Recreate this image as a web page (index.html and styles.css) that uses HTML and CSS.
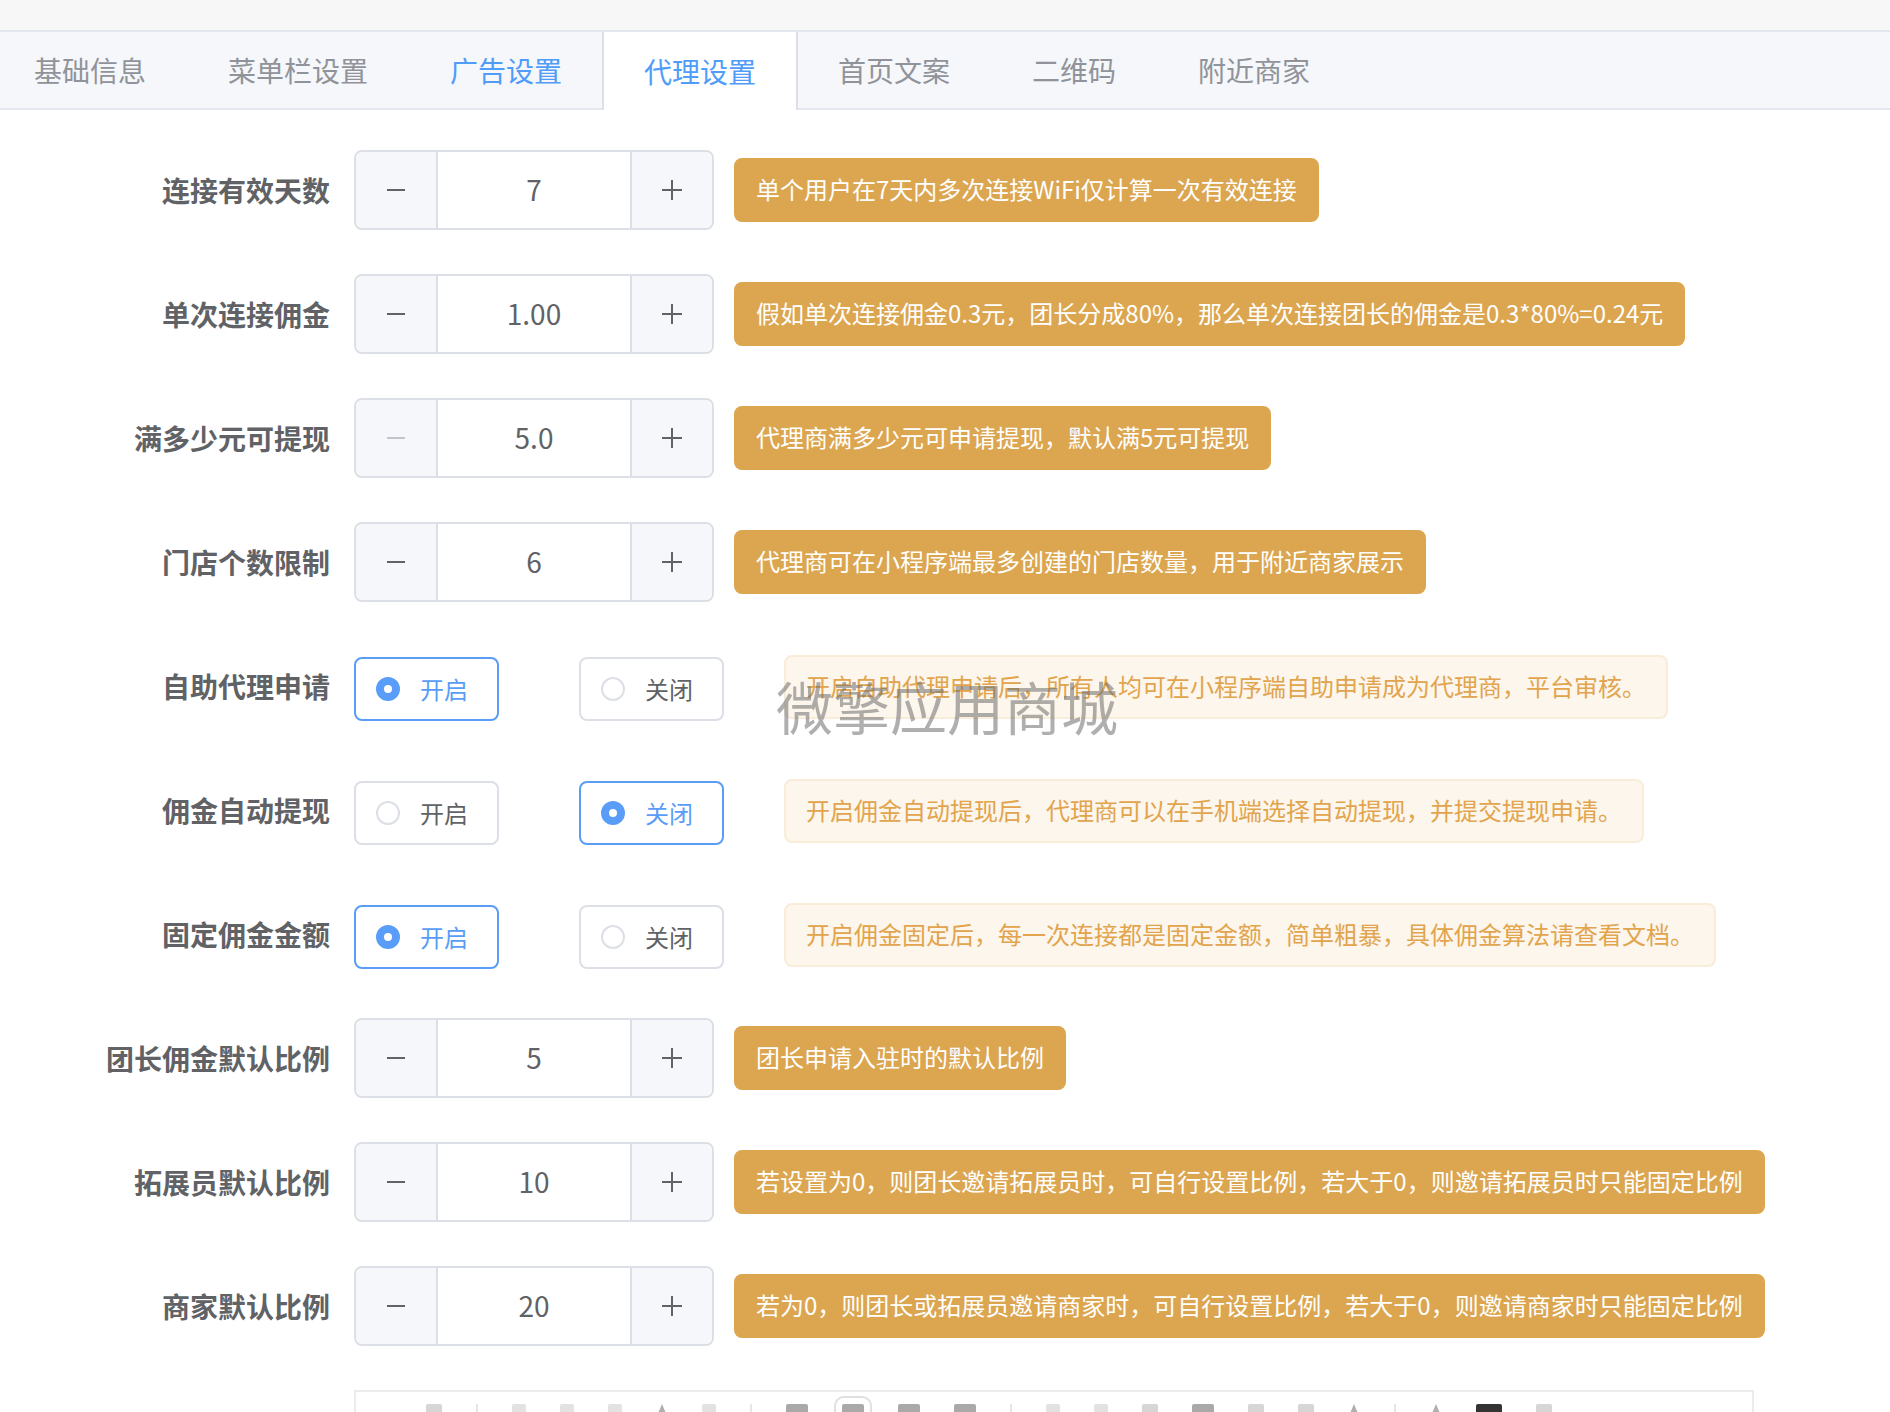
FILE: index.html
```html
<!DOCTYPE html>
<html lang="zh-CN">
<head>
<meta charset="utf-8">
<title>代理设置</title>
<link rel="stylesheet" href="styles.css">
</head>
<body>
<div class="top-strip"></div>
<div class="tabs-header">
  <div class="tab">基础信息</div>
  <div class="tab">菜单栏设置</div>
  <div class="tab hover">广告设置</div>
  <div class="tab active">代理设置</div>
  <div class="tab">首页文案</div>
  <div class="tab">二维码</div>
  <div class="tab">附近商家</div>
</div>

<div class="form">
  <div class="item">
    <div class="label">连接有效天数</div>
    <div class="stepper">
      <span class="step-btn dec"><svg width="22" height="22" viewBox="0 0 22 22"><path d="M2 11h18" stroke="#606266" stroke-width="2"/></svg></span>
      <span class="step-val">7</span>
      <span class="step-btn inc"><svg width="22" height="22" viewBox="0 0 22 22"><path d="M1 11h20M11 1v20" stroke="#606266" stroke-width="2"/></svg></span>
    </div>
    <div class="tag dark">单个用户在7天内多次连接WiFi仅计算一次有效连接</div>
  </div>

  <div class="item">
    <div class="label">单次连接佣金</div>
    <div class="stepper">
      <span class="step-btn dec"><svg width="22" height="22" viewBox="0 0 22 22"><path d="M2 11h18" stroke="#606266" stroke-width="2"/></svg></span>
      <span class="step-val">1.00</span>
      <span class="step-btn inc"><svg width="22" height="22" viewBox="0 0 22 22"><path d="M1 11h20M11 1v20" stroke="#606266" stroke-width="2"/></svg></span>
    </div>
    <div class="tag dark">假如单次连接佣金0.3元，团长分成80%，那么单次连接团长的佣金是0.3*80%=0.24元</div>
  </div>

  <div class="item">
    <div class="label">满多少元可提现</div>
    <div class="stepper">
      <span class="step-btn dec"><svg width="22" height="22" viewBox="0 0 22 22"><path d="M2 11h18" stroke="#c0c4cc" stroke-width="2"/></svg></span>
      <span class="step-val">5.0</span>
      <span class="step-btn inc"><svg width="22" height="22" viewBox="0 0 22 22"><path d="M1 11h20M11 1v20" stroke="#606266" stroke-width="2"/></svg></span>
    </div>
    <div class="tag dark">代理商满多少元可申请提现，默认满5元可提现</div>
  </div>

  <div class="item">
    <div class="label">门店个数限制</div>
    <div class="stepper">
      <span class="step-btn dec"><svg width="22" height="22" viewBox="0 0 22 22"><path d="M2 11h18" stroke="#606266" stroke-width="2"/></svg></span>
      <span class="step-val">6</span>
      <span class="step-btn inc"><svg width="22" height="22" viewBox="0 0 22 22"><path d="M1 11h20M11 1v20" stroke="#606266" stroke-width="2"/></svg></span>
    </div>
    <div class="tag dark">代理商可在小程序端最多创建的门店数量，用于附近商家展示</div>
  </div>

  <div class="item">
    <div class="label">自助代理申请</div>
    <div class="radio checked"><span class="dot"></span><span class="rlabel">开启</span></div>
    <div class="radio"><span class="dot"></span><span class="rlabel">关闭</span></div>
    <div class="tag light">开启自助代理申请后，所有人均可在小程序端自助申请成为代理商，平台审核。</div>
  </div>

  <div class="item">
    <div class="label">佣金自动提现</div>
    <div class="radio"><span class="dot"></span><span class="rlabel">开启</span></div>
    <div class="radio checked"><span class="dot"></span><span class="rlabel">关闭</span></div>
    <div class="tag light">开启佣金自动提现后，代理商可以在手机端选择自动提现，并提交提现申请。</div>
  </div>

  <div class="item">
    <div class="label">固定佣金金额</div>
    <div class="radio checked"><span class="dot"></span><span class="rlabel">开启</span></div>
    <div class="radio"><span class="dot"></span><span class="rlabel">关闭</span></div>
    <div class="tag light">开启佣金固定后，每一次连接都是固定金额，简单粗暴，具体佣金算法请查看文档。</div>
  </div>

  <div class="item">
    <div class="label">团长佣金默认比例</div>
    <div class="stepper">
      <span class="step-btn dec"><svg width="22" height="22" viewBox="0 0 22 22"><path d="M2 11h18" stroke="#606266" stroke-width="2"/></svg></span>
      <span class="step-val">5</span>
      <span class="step-btn inc"><svg width="22" height="22" viewBox="0 0 22 22"><path d="M1 11h20M11 1v20" stroke="#606266" stroke-width="2"/></svg></span>
    </div>
    <div class="tag dark">团长申请入驻时的默认比例</div>
  </div>

  <div class="item">
    <div class="label">拓展员默认比例</div>
    <div class="stepper">
      <span class="step-btn dec"><svg width="22" height="22" viewBox="0 0 22 22"><path d="M2 11h18" stroke="#606266" stroke-width="2"/></svg></span>
      <span class="step-val">10</span>
      <span class="step-btn inc"><svg width="22" height="22" viewBox="0 0 22 22"><path d="M1 11h20M11 1v20" stroke="#606266" stroke-width="2"/></svg></span>
    </div>
    <div class="tag dark">若设置为0，则团长邀请拓展员时，可自行设置比例，若大于0，则邀请拓展员时只能固定比例</div>
  </div>

  <div class="item">
    <div class="label">商家默认比例</div>
    <div class="stepper">
      <span class="step-btn dec"><svg width="22" height="22" viewBox="0 0 22 22"><path d="M2 11h18" stroke="#606266" stroke-width="2"/></svg></span>
      <span class="step-val">20</span>
      <span class="step-btn inc"><svg width="22" height="22" viewBox="0 0 22 22"><path d="M1 11h20M11 1v20" stroke="#606266" stroke-width="2"/></svg></span>
    </div>
    <div class="tag dark">若为0，则团长或拓展员邀请商家时，可自行设置比例，若大于0，则邀请商家时只能固定比例</div>
  </div>

  <div class="editor">
    <div class="toolbar">
      <span class="ic w1"></span><span class="sep"></span>
      <span class="ic w2"></span><span class="ic w2"></span><span class="ic w2"></span>
      <span class="ic tri"></span><span class="ic w2"></span><span class="sep"></span>
      <span class="ic dk"></span><span class="ic dk boxed"></span><span class="ic dk"></span><span class="ic dk"></span><span class="sep"></span>
      <span class="ic w2"></span><span class="ic w2"></span>
      <span class="ic w1"></span><span class="ic dk"></span><span class="ic w1"></span><span class="ic w1"></span>
      <span class="ic tri"></span><span class="sep"></span><span class="ic tri"></span>
      <span class="ic blk"></span><span class="ic w1"></span>
    </div>
  </div>
</div>

<div class="watermark">微擎应用商城</div>
</body>
</html>
```

FILE: styles.css
```css
html, body {
  margin: 0;
  padding: 0;
  background: #ffffff;
}
body {
  font-family: "Noto Sans CJK SC", "Noto Sans", sans-serif;
  color: #606266;
  overflow: hidden;
  height: 1412px;
  position: relative;
}

.top-strip {
  height: 30px;
  background: #f7f7f7;
}

.tabs-header {
  display: flex;
  height: 76px;
  background: #f5f7fa;
  border-top: 2px solid #e4e7ed;
  border-bottom: 2px solid #e4e7ed;
  padding-left: 0;
  margin-left: -6px;
}
.tab {
  display: flex;
  align-items: center;
  padding: 0 40px;
  border-left: 2px solid transparent;
  border-right: 2px solid transparent;
  margin-left: -2px;
  font-size: 28px;
  color: #909399;
  white-space: nowrap;
}
.tab.hover {
  color: #4f9cf9;
}
.tab.active {
  background: #ffffff;
  color: #4f9cf9;
  border-left-color: #dcdfe6;
  border-right-color: #dcdfe6;
  margin-bottom: -2px;
}

.form {
  padding-top: 40px;
}
.item {
  display: flex;
  align-items: center;
  height: 80px;
  margin-bottom: 44px;
}
.label {
  width: 354px;
  flex: none;
  box-sizing: border-box;
  padding-right: 24px;
  text-align: right;
  font-size: 28px;
  font-weight: 700;
  color: #606266;
  white-space: nowrap;
}

.stepper {
  display: flex;
  flex: none;
  width: 360px;
  height: 80px;
  box-sizing: border-box;
  border: 2px solid #dcdfe6;
  border-radius: 8px;
  overflow: hidden;
}
.step-btn {
  width: 80px;
  flex: none;
  background: #f5f7fa;
  display: flex;
  align-items: center;
  justify-content: center;
}
.step-btn.dec {
  border-right: 2px solid #dcdfe6;
}
.step-btn.inc {
  border-left: 2px solid #dcdfe6;
}
.step-val {
  flex: 1;
  text-align: center;
  font-size: 28px;
  line-height: 74px;
  color: #606266;
}

.tag {
  margin-left: 20px;
  height: 64px;
  box-sizing: border-box;
  padding: 0 20px;
  border: 2px solid;
  border-radius: 8px;
  font-size: 24px;
  line-height: 58px;
  white-space: nowrap;
}
.tag.dark {
  background: #dca650;
  border-color: #dca650;
  color: #ffffff;
}
.tag.light {
  margin-left: 0;
  margin-top: 2px;
  background: #fcf6ec;
  border-color: #f9ecd9;
  color: #e2a44c;
}

.radio {
  display: flex;
  align-items: center;
  flex: none;
  height: 64px;
  box-sizing: border-box;
  padding: 0 29px 0 20px;
  margin-top: 5px;
  border: 2px solid #dcdfe6;
  border-radius: 8px;
  margin-right: 60px;
}
.radio + .radio {
  margin-left: 20px;
}
.dot {
  width: 24px;
  height: 24px;
  box-sizing: border-box;
  border: 2px solid #dcdfe6;
  border-radius: 50%;
  background: #ffffff;
  display: flex;
  align-items: center;
  justify-content: center;
}
.rlabel {
  padding-left: 20px;
  font-size: 24px;
  line-height: 30px;
  color: #606266;
}
.radio.checked {
  border-color: #5a9df8;
}
.radio.checked .dot {
  border-color: #5a9df8;
  background: #5a9df8;
}
.radio.checked .dot::after {
  content: "";
  width: 8px;
  height: 8px;
  border-radius: 50%;
  background: #ffffff;
}
.radio.checked .rlabel {
  color: #5a9df8;
}

.editor {
  margin-left: 354px;
  width: 1400px;
  height: 120px;
  box-sizing: border-box;
  border: 2px solid #ececec;
}
.toolbar {
  display: flex;
  align-items: flex-start;
  gap: 34px;
  padding: 12px 0 0 70px;
}
.ic {
  width: 16px;
  height: 14px;
  background: #d6d6d6;
  border-radius: 2px;
}
.ic.w2 {
  background: #e2e2e2;
  width: 14px;
}
.ic.dk {
  background: #a9a9a9;
  width: 22px;
}
.ic.boxed {
  outline: 2px solid #e0e0e0;
  outline-offset: 6px;
}
.ic.tri {
  width: 0;
  height: 0;
  background: none;
  border-left: 6px solid transparent;
  border-right: 6px solid transparent;
  border-bottom: 14px solid #b0b0b0;
  border-radius: 0;
}
.ic.blk {
  background: #333333;
  width: 26px;
}
.sep {
  width: 2px;
  height: 20px;
  background: #e6e6e6;
}

.watermark {
  position: absolute;
  left: 776px;
  top: 670px;
  font-size: 57px;
  line-height: 70px;
  color: rgba(110, 110, 110, 0.55);
  white-space: nowrap;
  pointer-events: none;
}
```
